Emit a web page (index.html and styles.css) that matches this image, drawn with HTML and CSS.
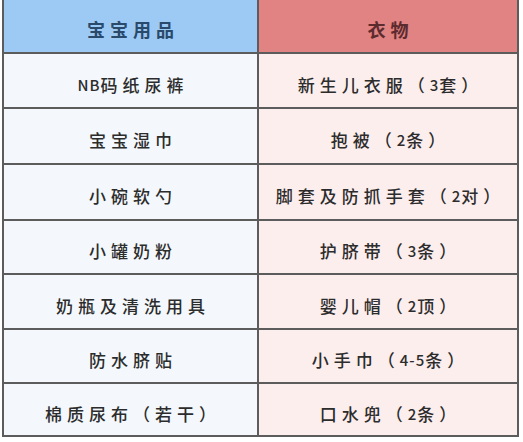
FILE: index.html
```html
<!DOCTYPE html>
<html lang="zh-CN">
<head>
<meta charset="utf-8">
<title>宝宝用品与衣物清单</title>
<link rel="stylesheet" href="styles.css">
</head>
<body>
<div class="sheet">
  <div class="cell head head-left">宝宝用品</div>
  <div class="cell head head-right">衣物</div>

  <div class="cell left"><span class="tight">NB</span>码纸尿裤</div>
  <div class="cell right">新生儿衣服（<span class="tight">3</span>套）</div>

  <div class="cell left">宝宝湿巾</div>
  <div class="cell right">抱被（<span class="tight">2</span>条）</div>

  <div class="cell left">小碗软勺</div>
  <div class="cell right">脚套及防抓手套（<span class="tight">2</span>对）</div>

  <div class="cell left">小罐奶粉</div>
  <div class="cell right">护脐带（<span class="tight">3</span>条）</div>

  <div class="cell left">奶瓶及清洗用具</div>
  <div class="cell right">婴儿帽（<span class="tight">2</span>顶）</div>

  <div class="cell left">防水脐贴</div>
  <div class="cell right">小手巾（<span class="tight">4-5</span>条）</div>

  <div class="cell left">棉质尿布（若干）</div>
  <div class="cell right">口水兜（<span class="tight">2</span>条）</div>
</div>
</body>
</html>
```

FILE: styles.css
```css
html, body {
  margin: 0;
  padding: 0;
  background: #ffffff;
}

body {
  width: 523px;
  height: 442px;
  overflow: hidden;
  font-family: "Noto Sans CJK SC", "Noto Sans", sans-serif;
}

.sheet {
  margin-left: 2px;
  width: 515px;
  display: grid;
  grid-template-columns: 255px 260px;
  grid-template-rows: 54px 55px 56px 56px 54px 55px 54px 53px;
  border-left: 2px solid #5c5c5c;
}

.cell {
  display: flex;
  align-items: center;
  justify-content: center;
  padding-top: 7px;
  padding-left: 5px;
  box-sizing: border-box;
  border-right: 2px solid #5c5c5c;
  border-bottom: 2px solid #5c5c5c;
  font-size: 17px;
  font-weight: 500;
  letter-spacing: 5px;
  color: #2c2c2c;
  white-space: nowrap;
}

.tight {
  letter-spacing: 1px;
  font-size: 15px;
}

.head {
  font-size: 18px;
  font-weight: 700;
  padding-top: 6px;
}

.head-left {
  background: #9dc9f5;
  color: #2a4a6c;
}

.head-right {
  background: #e18283;
  color: #5b2b2e;
}

.left {
  background: #f4f8fd;
}

.right {
  background: #fdeeee;
}
```
